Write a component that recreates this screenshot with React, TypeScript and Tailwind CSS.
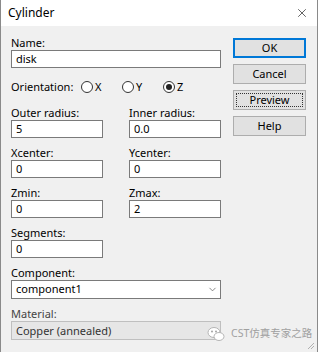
import { ChevronDown, X } from "lucide-react"

function Label({ text }: { text: string }) {
  return <div className="h-[14px] leading-[14px]">{text}</div>
}

function Field({ value, w = "w-[92px]" }: { value: string; w?: string }) {
  return (
    <div className={`${w} h-[18px] bg-white border border-[#7a7a7a] px-[4px] leading-[16px]`}>{value}</div>
  )
}

function Radio({ label, checked }: { label: string; checked?: boolean }) {
  return (
    <div className="w-[41px] flex items-center gap-[2px]">
      <span className="w-[12px] h-[12px] rounded-full border border-[#333] bg-white flex items-center justify-center">
        {checked && <span className="w-[6px] h-[6px] rounded-full bg-[#222]" />}
      </span>
      <span>{label}</span>
    </div>
  )
}

function Btn({ text, variant }: { text: string; variant?: "default" | "focus" }) {
  return (
    <div
      className={`h-[20px] flex items-center justify-center bg-[#e1e1e1] border ${
        variant === "default" ? "border-[#0078d7] shadow-[inset_0_0_0_1px_#0078d7]" : "border-[#adadad]"
      }`}
    >
      {variant === "focus" ? (
        <div className="w-[67px] h-[14px] border border-dotted border-[#333] flex items-center justify-center">{text}</div>
      ) : (
        text
      )}
    </div>
  )
}

export default function App() {
  return (
    <div
      className="relative w-[318px] h-[352px] bg-[#f0f0f0] border-l border-r border-[#8a8a8a] text-[11px] text-black overflow-hidden"
      style={{ fontFamily: '"Noto Sans", "Noto Sans CJK SC", sans-serif' }}
    >
      {/* Title bar */}
      <div className="h-[26px] bg-white flex items-center justify-between pl-[7px] pr-[8px]">
        <span className="text-[12px]">Cylinder</span>
        <X className="w-[14px] h-[14px] text-[#222]" strokeWidth={1.2} />
      </div>

      <div className="flex pl-[10px] pr-[11px]">
        {/* Left column */}
        <div className="w-[210px] pt-[10px] flex flex-col">
          <Label text="Name:" />
          <Field value="disk" w="w-[210px]" />

          <div className="mt-[12px] h-[14px] flex items-center">
            <span className="w-[70px]">Orientation:</span>
            <Radio label="X" />
            <Radio label="Y" />
            <Radio label="Z" checked />
          </div>

          <div className="mt-[12px] grid grid-cols-[92px_92px] gap-x-[26px] gap-y-[8px]">
            <div>
              <Label text="Outer radius:" />
              <Field value="5" />
            </div>
            <div>
              <Label text="Inner radius:" />
              <Field value="0.0" />
            </div>
            <div>
              <Label text="Xcenter:" />
              <Field value="0" />
            </div>
            <div>
              <Label text="Ycenter:" />
              <Field value="0" />
            </div>
            <div>
              <Label text="Zmin:" />
              <Field value="0" />
            </div>
            <div>
              <Label text="Zmax:" />
              <Field value="2" />
            </div>
            <div>
              <Label text="Segments:" />
              <Field value="0" />
            </div>
          </div>

          <div className="mt-[8px]">
            <Label text="Component:" />
            <div className="w-[210px] h-[19px] bg-white border border-[#7a7a7a] pl-[4px] pr-[2px] flex items-center justify-between">
              <span>component1</span>
              <ChevronDown className="w-[11px] h-[11px] text-[#555]" strokeWidth={1.5} />
            </div>
          </div>

          <div className="mt-[8px]">
            <div className="h-[14px] leading-[14px] text-[#444]">Material:</div>
            <div className="w-[210px] h-[19px] bg-[#e6e6e6] border border-[#bfbfbf] px-[4px] leading-[17px] text-[#333]">
              Copper (annealed)
            </div>
          </div>
        </div>

        {/* Buttons */}
        <div className="ml-auto w-[73px] pt-[12px] flex flex-col gap-[6px]">
          <Btn text="OK" variant="default" />
          <Btn text="Cancel" />
          <Btn text="Preview" variant="focus" />
          <Btn text="Help" />
        </div>
      </div>

      {/* Watermark */}
      <div className="absolute left-[206px] top-[326px] flex items-center gap-[6px] text-[#a0a0a0] text-[10.5px]">
        <svg width="18" height="16" viewBox="0 0 18 16">
          <ellipse cx="7" cy="6.5" rx="6" ry="5" fill="#fff" stroke="#b5b5b5" />
          <ellipse cx="12" cy="10.5" rx="5" ry="4" fill="#fff" stroke="#b5b5b5" />
          <circle cx="5" cy="5.5" r="0.9" fill="#9a9a9a" />
          <circle cx="9" cy="5.5" r="0.9" fill="#9a9a9a" />
        </svg>
        <span>CST仿真专家之路</span>
      </div>

      {/* Resize grip */}
      <svg className="absolute right-[2px] bottom-[2px]" width="10" height="10" viewBox="0 0 10 10">
        <path d="M9 3 L3 9 M9 6 L6 9" stroke="#b0b0b0" strokeWidth="1" />
      </svg>
    </div>
  )
}
